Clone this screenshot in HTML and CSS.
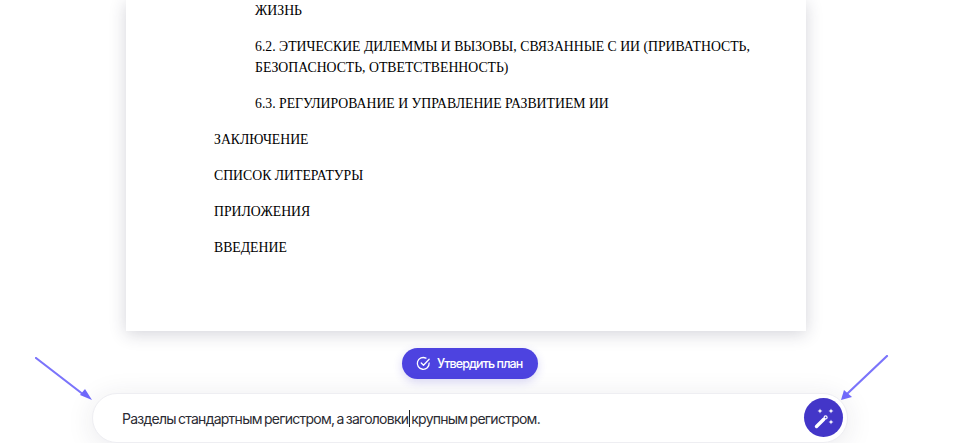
FILE: index.html
```html
<!doctype html>
<html>
 <head>
  <meta charset="utf-8">
  <link rel="stylesheet" href="styles.css">
 </head>
 <body>
  <div class="pagina">
   <div class="hoja">
    <p class="sub">ЖИЗНЬ</p>
    <p class="sub">6.2. ЭТИЧЕСКИЕ ДИЛЕММЫ И ВЫЗОВЫ, СВЯЗАННЫЕ С ИИ (ПРИВАТНОСТЬ, БЕЗОПАСНОСТЬ, ОТВЕТСТВЕННОСТЬ)</p>
    <p class="sub">6.3. РЕГУЛИРОВАНИЕ И УПРАВЛЕНИЕ РАЗВИТИЕМ ИИ</p>
    <p>ЗАКЛЮЧЕНИЕ</p>
    <p>СПИСОК ЛИТЕРАТУРЫ</p>
    <p>ПРИЛОЖЕНИЯ</p>
    <p>ВВЕДЕНИЕ</p>
   </div>
   <button class="aprobar">
    <svg width="15" height="15" viewBox="0 0 16 16" fill="none" stroke="#fff" stroke-width="1.400" stroke-linecap="round" stroke-linejoin="round">
     <path d="M14 7.500A6.300 6.300 0 1 1 10.600 2.300"/>
     <path d="M5.600 7.400 8 9.800l6-6.400"/>
    </svg>
    Утвердить план
   </button>
   <div class="entrada">
    <span class="texto">Разделы стандартным регистром, а заголовки<span class="cursor"></span>крупным регистром.</span>
    <div class="varita">
     <svg width="22" height="22" viewBox="0 0 22 22" fill="#fff">
      <path d="M3.500 19.500 10.800 12.200" stroke="#fff" stroke-width="3.400" stroke-linecap="round"/>
      <circle cx="12.600" cy="10.400" r="1.500" fill="none" stroke="#fff" stroke-width="1.200"/>
      <path d="M7 1.500l.7 1.800 1.800.7-1.800.7L7 6.500l-.7-1.800L4.500 4l1.800-.7zM18 1.500l.7 1.800 1.800.7-1.800.7-.7 1.800-.7-1.800-1.800-.7 1.800-.7zM18 12.500l.7 1.800 1.800.7-1.800.7-.7 1.800-.7-1.800-1.800-.7 1.800-.7z"/>
     </svg>
    </div>
   </div>
   <svg class="flecha flecha-izq" width="60" height="50" viewBox="0 0 60 50" fill="none">
    <path d="M1 1 49 38" stroke="#7b74fb" stroke-width="2.200" stroke-linecap="round"/>
    <path d="M57 43 45 38 50 32z" fill="#6f68fa"/>
   </svg>
   <svg class="flecha flecha-der" width="52" height="50" viewBox="0 0 52 50" fill="none">
    <path d="M49 1 10 38" stroke="#7b74fb" stroke-width="2.200" stroke-linecap="round"/>
    <path d="M3 45 6 35 14 42z" fill="#6f68fa"/>
   </svg>
  </div>
 </body>
</html>
```

FILE: styles.css
```css
html, body {
    margin: 0;
    padding: 0;
    background-color: #fff;
}
.pagina {
    position: relative;
    width: 974px;
    height: 443px;
    overflow: hidden;
    display: flex;
    flex-direction: column;
    align-items: flex-start;
    font-family: "Inter", "Liberation Sans", sans-serif;
}
.hoja {
    width: 680px;
    margin-left: 126px;
    padding: 0 48px 73px 88px;
    box-sizing: border-box;
    background-color: #fff;
    box-shadow: 0 3px 16px rgba(40, 40, 70, 0.2);
    font-family: "Liberation Serif", serif;
    font-size: 13.76px;
    line-height: 21px;
    color: #000;
}
.hoja p {
    margin: 0 0 15px;
}
.hoja p:last-child {
    margin-bottom: 0;
}
.hoja .sub {
    padding-left: 41px;
}
.aprobar {
    display: flex;
    align-items: center;
    gap: 6px;
    height: 31px;
    width: 136px;
    margin: 17px 0 0 402px;
    padding: 0 0 0 14px;
    box-sizing: border-box;
    border: none;
    border-radius: 16px;
    background-color: #4d43e0;
    box-shadow: 0 3px 10px rgba(60, 50, 200, 0.2);
    color: #fff;
    font-family: inherit;
    font-size: 12.5px;
    font-weight: 500;
    letter-spacing: -0.9px;
    white-space: nowrap;
}
.entrada {
    display: flex;
    align-items: center;
    justify-content: space-between;
    width: 756px;
    height: 50px;
    margin: 14px 0 0 92px;
    padding: 1px 4px 0 29px;
    box-sizing: border-box;
    border: 1px solid #eeeef2;
    border-radius: 25px;
    background-color: #fff;
    box-shadow: 0 4px 28px rgba(40, 40, 70, 0.1);
    color: #2b2b33;
    font-size: 14px;
    letter-spacing: -0.75px;
    word-spacing: -1px;
}
.cursor {
    display: inline-block;
    width: 1px;
    height: 17px;
    margin: 0 1px;
    vertical-align: -3px;
    background-color: #222;
}
.varita {
    display: flex;
    align-items: center;
    justify-content: center;
    width: 39px;
    height: 39px;
    margin-top: -2px;
    border-radius: 50%;
    background-color: #4336c8;
}
.flecha {
    position: absolute;
}
.flecha-izq {
    left: 35px;
    top: 357px;
}
.flecha-der {
    left: 838px;
    top: 355px;
}
```
